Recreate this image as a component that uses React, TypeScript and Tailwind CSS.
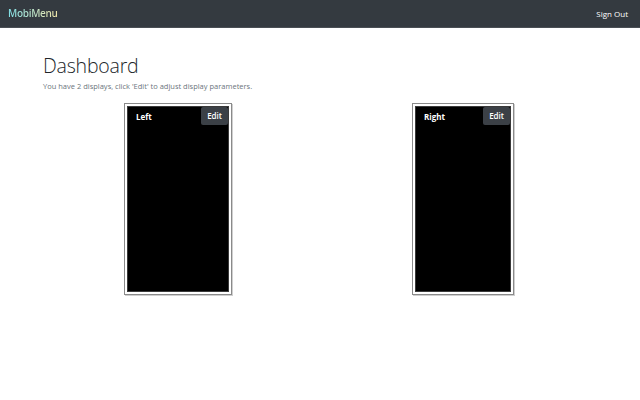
import React from "react";

function DisplayCard({ name, width }: { name: string; width: string }) {
  return (
    <div className={`${width} h-[192px] border border-[#8a8a8a] p-[2px] bg-white shadow-[1px_1px_0_#cfcfcf]`}>
      <div className="h-full w-full bg-black border border-[#3a3a3a] flex items-start justify-between">
        <span className="pl-[8px] pt-[4px] text-[8px] font-bold text-white leading-[12px]">{name}</span>
        <button className="h-[18px] px-[6px] bg-[#3b4046] rounded-[2px] text-[8px] font-semibold text-white leading-[18px]">
          Edit
        </button>
      </div>
    </div>
  );
}

export default function App() {
  return (
    <div className="w-[640px] h-[400px] bg-white" style={{ fontFamily: '"Open Sans", "Noto Sans", sans-serif' }}>
      <nav className="h-[28px] bg-[#343a40] border-b border-[#4a4f55] flex items-center justify-between px-[8px]">
        <span className="text-[10px] font-semibold tracking-[-0.3px] bg-gradient-to-r from-[#7fe0e6] to-[#efe4a6] bg-clip-text text-transparent">
          MobiMenu
        </span>
        <span className="text-[8px] font-medium text-white pr-[4px]">Sign Out</span>
      </nav>
      <div className="px-[43px] pt-[25px]">
        <h1 className="text-[19.5px] font-light tracking-[-0.2px] text-[#212529] leading-[26px]">Dashboard</h1>
        <p className="mt-[2px] text-[7.5px] text-[#6c757d] leading-[10px]">
          You have 2 displays, click 'Edit' to adjust display parameters.
        </p>
        <div className="flex mt-[12px] pl-[81px] gap-[180px]">
          <DisplayCard name="Left" width="w-[108px]" />
          <DisplayCard name="Right" width="w-[102px]" />
        </div>
      </div>
    </div>
  );
}
